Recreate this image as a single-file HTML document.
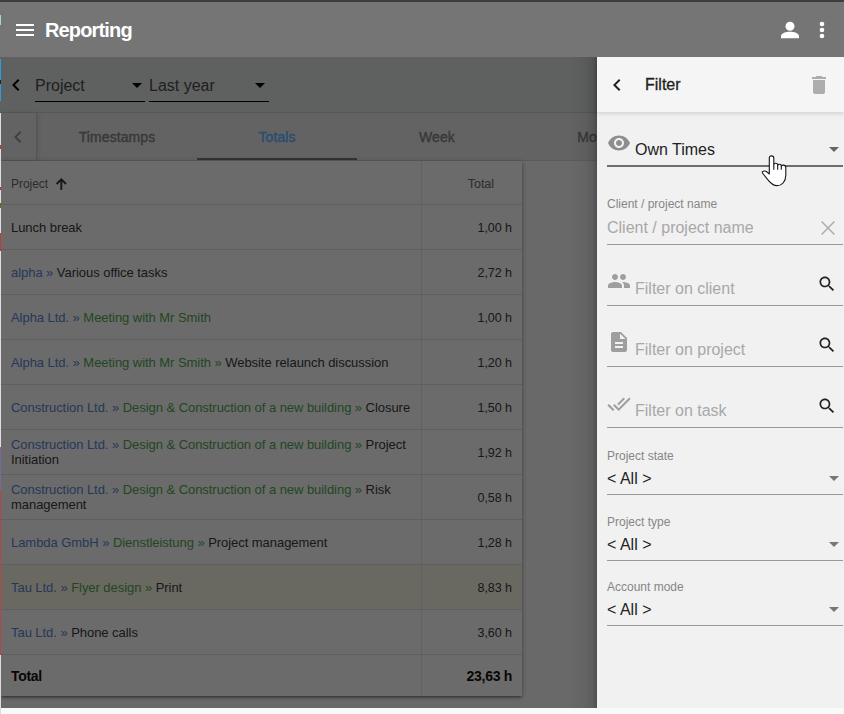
<!DOCTYPE html>
<html><head><meta charset="utf-8">
<style>
*{box-sizing:border-box;margin:0;padding:0}
html,body{width:844px;height:714px;overflow:hidden;background:#f9f9f9;font-family:"Liberation Sans",sans-serif}
.abs{position:absolute}
svg{position:absolute;display:block}
#appbar{left:0;top:0;width:844px;height:57px;background:#757575;z-index:5}
#topline{left:0;top:0;width:844px;height:2px;background:#3d3d3d;z-index:6}
#title{left:45px;top:18px;font-size:20px;font-weight:700;color:#fff;letter-spacing:-0.85px;line-height:24px}
/* underlying page */
#page{left:0;top:57px;width:844px;height:651px;background:#fafafa}
#toolbar{left:0;top:57px;width:844px;height:56px;background:#e2e8e4;border-bottom:1px solid #d0d0d0}
.sel{font-size:16px;color:#4a4a4a;line-height:20px}
#tabs{left:0;top:113px;width:844px;height:48px;background:#ebebeb;border-bottom:1px solid #d8d8d8}
.tab{top:0;width:160px;height:47px;text-align:center;font-size:14px;font-weight:400;letter-spacing:0.1px;line-height:48px;color:#858585;-webkit-text-stroke:0.35px #858585}
#table{left:1px;top:161px;width:521px;background:#fff;box-shadow:0px 1px 5px 0px rgba(0,0,0,0.3),0px 2px 2px 0px rgba(0,0,0,0.2),0px 3px 1px -2px rgba(0,0,0,0.12)}
.row{position:relative;height:45px;border-bottom:1px solid #e3e3e3;font-size:13px;color:#3a3a3a;letter-spacing:-0.05px}
.c1{position:absolute;left:10px;top:0;width:405px;height:44px;display:flex;align-items:center;line-height:15px;white-space:nowrap}
.c2{position:absolute;left:420px;top:0;width:101px;height:44px;border-left:1px solid #e8e8e8;text-align:right;padding-right:10px;padding-top:1px;display:flex;align-items:center;justify-content:flex-end;font-size:12.5px}
.b{color:#5c86d2}.g{color:#52a852}
#overlay{left:0;top:0;width:844px;height:708px;background:rgba(0,0,0,0.58)}
/* drawer */
#drawer{left:597px;top:57px;width:247px;height:651px;background:#f1f1f1;z-index:4}
#dshadow{left:567px;top:57px;width:30px;height:651px;background:linear-gradient(to right,rgba(0,0,0,0),rgba(0,0,0,.05) 60%,rgba(0,0,0,.12) 85%,rgba(0,0,0,.25))}
#dhead{left:0;top:0;width:247px;height:55px;background:#f5f5f5;box-shadow:0 2px 4px rgba(0,0,0,.12)}
.lbl{position:absolute;left:10px;font-size:12px;color:#868686;line-height:14px}
.val{position:absolute;font-size:16px;color:#222;line-height:18px}
.ph{position:absolute;font-size:16px;color:#a8a8a8;line-height:18px}
.ul{position:absolute;left:10px;width:236px;height:1px;background:#9a9a9a}
</style></head><body>

<div id="page" class="abs"></div>
<div id="toolbar" class="abs">
  <svg style="left:4px;top:16px" width="24" height="24" viewBox="0 0 24 24"><path fill="#000" d="M15.41 7.41L14 6l-6 6 6 6 1.41-1.41L10.83 12z"/></svg>
  <div class="sel abs" style="left:35px;top:19px">Project</div>
  <svg style="left:125px;top:16px" width="24" height="24" viewBox="0 0 24 24"><path fill="#000" d="M7 10l5 5 5-5z"/></svg>
  <div class="abs" style="left:35px;top:44px;width:110px;height:1px;background:#000"></div>
  <div class="sel abs" style="left:149px;top:19px">Last year</div>
  <svg style="left:248px;top:16px" width="24" height="24" viewBox="0 0 24 24"><path fill="#000" d="M7 10l5 5 5-5z"/></svg>
  <div class="abs" style="left:149px;top:44px;width:120px;height:1px;background:#000"></div>
</div>
<div id="tabs" class="abs">
  <div class="abs" style="left:0;top:0;width:37px;height:47px;border-right:1px solid #c8c8c8;box-shadow:1px 0 4px rgba(0,0,0,.12)"></div>
  <svg style="left:6px;top:12px" width="24" height="24" viewBox="0 0 24 24"><path fill="#9a9a9a" d="M15.41 7.41L14 6l-6 6 6 6 1.41-1.41L10.83 12z"/></svg>
  <div class="tab abs" style="left:37px">Timestamps</div>
  
  <div class="tab abs" style="left:357px">Week</div>
  <div class="tab abs" style="left:517px">Month</div>
  <div class="abs" style="left:197px;top:45px;width:160px;height:2px;background:#7a7a7a"></div>
</div>

<div id="table" class="abs">
  <div class="row" style="height:44px;color:#6a6a6a;font-size:12px">
    <div class="c1" style="padding-top:2px">Project</div><svg style="left:0;top:0" width="80" height="44"><path fill="none" stroke="#3a3a3a" stroke-width="1.9" d="M60.3 29V18.3M55.6 23L60.3 18.3L65 23"/></svg>
    <div class="c2" style="padding-right:28px;padding-top:2px">Total</div>
  </div>
  <div class="row"><div class="c1"><div>Lunch break</div></div><div class="c2">1,00 h</div></div>
  <div class="row"><div class="c1"><div><span class="b">alpha »</span> Various office tasks</div></div><div class="c2">2,72 h</div></div>
  <div class="row"><div class="c1"><div><span class="b">Alpha Ltd. »</span> <span class="g">Meeting with Mr Smith</span></div></div><div class="c2">1,00 h</div></div>
  <div class="row"><div class="c1"><div><span class="b">Alpha Ltd. »</span> <span class="g">Meeting with Mr Smith »</span> Website relaunch discussion</div></div><div class="c2">1,20 h</div></div>
  <div class="row"><div class="c1"><div><span class="b">Construction Ltd. »</span> <span class="g">Design &amp; Construction of a new building »</span> Closure</div></div><div class="c2">1,50 h</div></div>
  <div class="row"><div class="c1"><div><span class="b">Construction Ltd. »</span> <span class="g">Design &amp; Construction of a new building »</span> Project<br>Initiation</div></div><div class="c2">1,92 h</div></div>
  <div class="row"><div class="c1"><div><span class="b">Construction Ltd. »</span> <span class="g">Design &amp; Construction of a new building »</span> Risk<br>management</div></div><div class="c2">0,58 h</div></div>
  <div class="row"><div class="c1"><div><span class="b">Lambda GmbH »</span> <span class="g">Dienstleistung »</span> Project management</div></div><div class="c2">1,28 h</div></div>
  <div class="row" style="background:#fdfbe6"><div class="c1"><div><span class="b">Tau Ltd. »</span> <span class="g">Flyer design »</span> Print</div></div><div class="c2">8,83 h</div></div>
  <div class="row"><div class="c1"><div><span class="b">Tau Ltd. »</span> Phone calls</div></div><div class="c2">3,60 h</div></div>
  <div class="row" style="height:41px;border-bottom:0;font-weight:700;color:#111;font-size:14px;letter-spacing:-0.3px"><div class="c1" style="height:41px;padding-top:2px">Total</div><div class="c2" style="height:41px;font-size:14px;padding-right:10px;padding-top:0px">23,63 h</div></div>
</div>

<div id="overlay" class="abs"></div>
<div class="tab abs" style="left:197px;top:113px;z-index:3;color:#2a4c72;-webkit-text-stroke:0.4px #2a4c72">Totals</div>

<div id="appbar" class="abs">
  <svg style="left:13px;top:18px" width="24" height="24" viewBox="0 0 24 24"><path fill="#fff" d="M3 18h18v-2H3v2zm0-5h18v-2H3v2zm0-7v2h18V6H3z"/></svg>
  <div id="title" class="abs">Reporting</div>
  <svg style="left:0;top:0" width="844" height="57"><circle cx="790" cy="26.2" r="4.5" fill="#fff"/><path fill="#fff" d="M781 38.2V36.2C781 33.2 786 31.8 790 31.8S799 33.2 799 36.2V38.2Z"/><circle cx="822" cy="24" r="2.3" fill="#fff"/><circle cx="822" cy="30" r="2.3" fill="#fff"/><circle cx="822" cy="36" r="2.3" fill="#fff"/></svg>
</div>
<div id="topline" class="abs"></div>
<div class="abs" style="left:0;top:15px;width:1px;height:10px;background:#a8d8c8;z-index:7"></div>
<div class="abs" style="left:0;top:59px;width:1px;height:42px;background:#2a9ee0;z-index:7"></div>
<div class="abs" style="left:0;top:80px;width:1px;height:4px;background:#222;z-index:7"></div>
<div class="abs" style="left:0;top:113px;width:1px;height:334px;background:#dedede;z-index:7"></div>
<div class="abs" style="left:0;top:145px;width:1px;height:4px;background:#d03030;z-index:7"></div>
<div class="abs" style="left:0;top:187px;width:1px;height:3px;background:#c03030;z-index:7"></div>
<div class="abs" style="left:0;top:203px;width:1px;height:5px;background:#806020;z-index:7"></div>
<div class="abs" style="left:0;top:233px;width:1px;height:18px;background:#c03a3a;z-index:7"></div>
<div class="abs" style="left:0;top:447px;width:1px;height:43px;background:#7a6a9a;z-index:7"></div>
<div class="abs" style="left:0;top:490px;width:1px;height:165px;background:#b04848;z-index:7"></div>
<div class="abs" style="left:0;top:655px;width:1px;height:59px;background:#dcdcdc;z-index:7"></div>

<div id="dshadow" class="abs"></div>
<div id="drawer" class="abs">
  <div id="dhead" class="abs">
    <svg style="left:8px;top:16px" width="24" height="24" viewBox="0 0 24 24"><path fill="#222" d="M15.41 7.41L14 6l-6 6 6 6 1.41-1.41L10.83 12z"/></svg>
    <div class="abs" style="left:48px;top:19px;font-size:16px;color:#222;line-height:18px;-webkit-text-stroke:0.3px #222">Filter</div>
    <svg style="left:210px;top:16px" width="24" height="24" viewBox="0 0 24 24"><path fill="#adadad" d="M6 19c0 1.1.9 2 2 2h8c1.1 0 2-.9 2-2V7H6v12zM19 4h-3.5l-1-1h-5l-1 1H5v2h14V4z"/></svg>
  </div>
  <!-- own times -->
  <svg style="left:10px;top:74px" width="24" height="24" viewBox="0 0 24 24"><path fill="#8e8e8e" d="M12 4.5C7 4.5 2.73 7.61 1 12c1.73 4.39 6 7.5 11 7.5s9.27-3.11 11-7.5c-1.73-4.39-6-7.5-11-7.5zM12 17c-2.76 0-5-2.24-5-5s2.24-5 5-5 5 2.24 5 5-2.24 5-5 5zm0-8c-1.66 0-3 1.34-3 3s1.34 3 3 3 3-1.34 3-3-1.34-3-3-3z"/></svg>
  <div class="val" style="left:38px;top:84px">Own Times</div>
  <svg style="left:225px;top:80px" width="24" height="24" viewBox="0 0 24 24"><path fill="#666" d="M7 10l5 5 5-5z"/></svg>
  <div class="ul" style="top:108px;height:2px;background:#6e6e6e"></div>

  <div class="lbl" style="top:140px">Client / project name</div>
  <div class="ph" style="left:10px;top:162px">Client / project name</div>
  <svg style="left:0;top:0" width="247" height="260"><path stroke="#ababab" stroke-width="1.4" fill="none" d="M224.6 164.6L237.4 177.4M237.4 164.6L224.6 177.4"/></svg>
  <div class="ul" style="top:187px"></div>

  <svg style="left:10px;top:212px" width="24" height="24" viewBox="0 0 24 24"><path fill="#9e9e9e" d="M16 11c1.66 0 2.990-1.34 2.99-3S17.66 5 16 5c-1.66 0-3 1.34-3 3s1.34 3 3 3zm-8 0c1.66 0 2.99-1.34 2.99-3S9.66 5 8 5C6.34 5 5 6.34 5 8s1.34 3 3 3zm0 2c-2.33 0-7 1.17-7 3.5V19h14v-2.5c0-2.33-4.67-3.5-7-3.5zm8 0c-.29 0-.62.02-.97.05 1.16.84 1.970 1.97 1.97 3.45V19h6v-2.5c0-2.33-4.67-3.5-7-3.5z"/></svg>
  <div class="ph" style="left:38px;top:223px">Filter on client</div>
  <svg style="left:220px;top:217px" width="20" height="20" viewBox="0 0 24 24"><path fill="#222" d="M15.5 14h-.79l-.28-.27C15.41 12.590 16 11.11 16 9.5 16 5.91 13.09 3 9.5 3S3 5.91 3 9.5 5.91 16 9.5 16c1.61 0 3.09-.59 4.23-1.57l.27.28v.79l5 4.99L20.49 19l-4.99-5zm-6 0C7.01 14 5 11.99 5 9.5S7.01 5 9.5 5 14 7.01 14 9.5 11.99 14 9.5 14z"/></svg>
  <div class="ul" style="top:248px"></div>

  <svg style="left:10px;top:273px" width="24" height="24" viewBox="0 0 24 24"><path fill="#9e9e9e" d="M14 2H6c-1.1 0-1.99.9-1.99 2L4 20c0 1.1.89 2 1.99 2H18c1.1 0 2-.9 2-2V8l-6-6zm2 16H8v-2h8v2zm0-4H8v-2h8v2zm-3-5V3.5L18.5 9H13z"/></svg>
  <div class="ph" style="left:38px;top:284px">Filter on project</div>
  <svg style="left:220px;top:278px" width="20" height="20" viewBox="0 0 24 24"><path fill="#222" d="M15.5 14h-.79l-.28-.27C15.41 12.590 16 11.11 16 9.5 16 5.91 13.09 3 9.5 3S3 5.91 3 9.5 5.91 16 9.5 16c1.61 0 3.09-.59 4.23-1.57l.27.28v.79l5 4.99L20.49 19l-4.99-5zm-6 0C7.01 14 5 11.99 5 9.5S7.01 5 9.5 5 14 7.01 14 9.5 11.99 14 9.5 14z"/></svg>
  <div class="ul" style="top:309px"></div>

  <svg style="left:10px;top:335px" width="24" height="24" viewBox="0 0 24 24"><path fill="#9e9e9e" d="M18 7l-1.41-1.41-6.34 6.34 1.41 1.41L18 7zm4.24-1.41L11.66 16.17 7.48 12l-1.410 1.41L11.66 19l12-12-1.42-1.41zM.41 13.41L6 19l1.41-1.41L1.83 12 .41 13.41z"/></svg>
  <div class="ph" style="left:38px;top:345px">Filter on task</div>
  <svg style="left:220px;top:339px" width="20" height="20" viewBox="0 0 24 24"><path fill="#222" d="M15.5 14h-.79l-.28-.27C15.41 12.590 16 11.11 16 9.5 16 5.91 13.09 3 9.5 3S3 5.91 3 9.5 5.91 16 9.5 16c1.61 0 3.09-.59 4.23-1.57l.27.28v.79l5 4.99L20.49 19l-4.99-5zm-6 0C7.01 14 5 11.99 5 9.5S7.01 5 9.5 5 14 7.01 14 9.5 11.99 14 9.5 14z"/></svg>
  <div class="ul" style="top:370px"></div>

  <div class="lbl" style="top:392px">Project state</div>
  <div class="val" style="left:10px;top:413px">&lt; All &gt;</div>
  <svg style="left:225px;top:409px" width="24" height="24" viewBox="0 0 24 24"><path fill="#777" d="M7 10l5 5 5-5z"/></svg>
  <div class="ul" style="top:437px"></div>

  <div class="lbl" style="top:458px">Project type</div>
  <div class="val" style="left:10px;top:479px">&lt; All &gt;</div>
  <svg style="left:225px;top:475px" width="24" height="24" viewBox="0 0 24 24"><path fill="#777" d="M7 10l5 5 5-5z"/></svg>
  <div class="ul" style="top:503px"></div>

  <div class="lbl" style="top:523px">Account mode</div>
  <div class="val" style="left:10px;top:544px">&lt; All &gt;</div>
  <svg style="left:225px;top:540px" width="24" height="24" viewBox="0 0 24 24"><path fill="#777" d="M7 10l5 5 5-5z"/></svg>
  <div class="ul" style="top:568px"></div>
</div>

<!-- cursor -->
<svg style="left:760px;top:154px;z-index:10" width="30" height="34" viewBox="0 0 30 34">
  <path fill="#fff" stroke="#15151f" stroke-width="1.1" stroke-linejoin="round" d="M9.3 20V4C9.3 2.7 10.2 1.9 11.5 1.9C12.8 1.9 13.8 2.7 13.8 4V10.8C13.9 9.8 14.7 9.2 15.7 9.2C16.8 9.2 17.6 9.9 17.7 11C17.9 10.6 18.6 10.3 19.5 10.3C20.6 10.3 21.3 11 21.3 12C21.6 11.4 22.3 11.1 23.3 11.1C24.7 11.1 25.8 12 25.8 13.5V21C25.8 27.5 22 31.6 17 31.6C13 31.6 10.8 29.3 8.6 26.6L2.8 19.5C2 18.5 2.2 17.5 3.2 17.2C4.5 16.7 5.8 17 6.8 17.8L9.3 20Z"/>
  <path fill="none" stroke="#15151f" stroke-width="1.1" d="M13.8 10.8V15.8M17.7 11V15.8M21.3 12V15.8"/>
</svg>
</body></html>
